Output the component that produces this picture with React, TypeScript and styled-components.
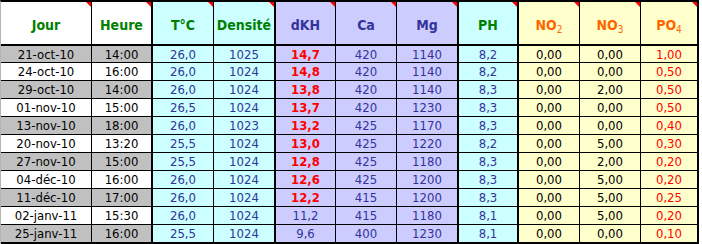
import React from 'react';
import styled, { createGlobalStyle, css } from 'styled-components';

const GlobalStyle = createGlobalStyle`
  html, body {
    margin: 0;
    padding: 0;
    background: #fff;
  }
  body {
    font-family: 'DejaVu Sans Condensed', 'DejaVu Sans', sans-serif;
  }
`;

type Tone = 'plain' | 'cyan' | 'lav' | 'yellow';

const COLS: { w: number; b: number; tone: Tone; head: React.ReactNode; hc: string }[] = [
  { w: 91, b: 1, tone: 'plain', head: 'Jour', hc: '#008000' },
  { w: 61, b: 2, tone: 'plain', head: 'Heure', hc: '#008000' },
  { w: 61, b: 1, tone: 'cyan', head: 'T°C', hc: '#008000' },
  { w: 62, b: 2, tone: 'cyan', head: 'Densité', hc: '#008000' },
  { w: 60, b: 1, tone: 'lav', head: 'dKH', hc: '#333399' },
  { w: 61, b: 1, tone: 'lav', head: 'Ca', hc: '#333399' },
  { w: 62, b: 2, tone: 'lav', head: 'Mg', hc: '#333399' },
  { w: 60, b: 2, tone: 'cyan', head: 'PH', hc: '#008000' },
  { w: 61, b: 1, tone: 'yellow', head: <>NO<sub>2</sub></>, hc: '#ff6600' },
  { w: 61, b: 1, tone: 'yellow', head: <>NO<sub>3</sub></>, hc: '#ff6600' },
  { w: 58, b: 2, tone: 'yellow', head: <>PO<sub>4</sub></>, hc: '#ff6600' },
];

const ROWS = [
  ['21-oct-10', '14:00', '26,0', '1025', '14,7', '420', '1140', '8,2', '0,00', '0,00', '1,00'],
  ['24-oct-10', '16:00', '26,0', '1024', '14,8', '420', '1140', '8,2', '0,00', '0,00', '0,50'],
  ['29-oct-10', '14:00', '26,0', '1024', '13,8', '420', '1140', '8,3', '0,00', '2,00', '0,50'],
  ['01-nov-10', '15:00', '26,5', '1024', '13,7', '420', '1230', '8,3', '0,00', '0,00', '0,50'],
  ['13-nov-10', '18:00', '26,0', '1023', '13,2', '425', '1170', '8,3', '0,00', '0,00', '0,40'],
  ['20-nov-10', '13:20', '25,5', '1024', '13,0', '425', '1220', '8,2', '0,00', '5,00', '0,30'],
  ['27-nov-10', '15:00', '25,5', '1024', '12,8', '425', '1180', '8,3', '0,00', '2,00', '0,20'],
  ['04-déc-10', '16:00', '26,0', '1024', '12,6', '425', '1200', '8,3', '0,00', '5,00', '0,20'],
  ['11-déc-10', '17:00', '26,0', '1024', '12,2', '415', '1200', '8,3', '0,00', '5,00', '0,25'],
  ['02-janv-11', '15:30', '26,0', '1024', '11,2', '415', '1180', '8,1', '0,00', '5,00', '0,20'],
  ['25-janv-11', '16:00', '25,5', '1024', '9,6', '400', '1230', '8,1', '0,00', '0,00', '0,10'],
];

const fills: Record<Tone, string> = {
  plain: '#ffffff',
  cyan: '#ccffff',
  lav: '#ccccff',
  yellow: '#ffffcc',
};

const Sheet = styled.div`
  display: grid;
  grid-template-columns: ${COLS.map((c) => `${c.w}px`).join(' ')};
  width: max-content;
  border-left: 1px solid #b4b4b4;
  border-top: 2px solid #000;
`;

const HeadCell = styled.div<{ $fill: string; $b: number; $color: string }>`
  position: relative;
  box-sizing: border-box;
  height: 44px;
  display: flex;
  align-items: center;
  justify-content: center;
  padding-top: 4px;
  background: ${(p) => p.$fill};
  border-right: ${(p) => p.$b}px solid #000;
  border-bottom: 2px solid #000;
  color: ${(p) => p.$color};
  font-weight: bold;
  font-size: 14px;
`;

const HeadLabel = styled.span`
  line-height: 1;

  sub {
    font-size: 10px;
    font-weight: normal;
    vertical-align: -3px;
    line-height: 0;
  }
`;

const Flag = styled.span`
  position: absolute;
  top: 0;
  right: 0;
  width: 0;
  height: 0;
  border-top: 5px solid #ff0000;
  border-left: 5px solid transparent;
`;

const Cell = styled.div<{ $fill: string; $b: number; $h: number; $last: boolean; $color: string; $bold: boolean }>`
  box-sizing: border-box;
  height: ${(p) => p.$h}px;
  display: flex;
  align-items: center;
  justify-content: center;
  background: ${(p) => p.$fill};
  border-right: ${(p) => p.$b}px solid #000;
  border-bottom: ${(p) => (p.$last ? 2 : 1)}px solid #000;
  color: ${(p) => p.$color};
  font-size: 13px;
  line-height: 1;
  ${(p) =>
    p.$bold &&
    css`
      font-weight: bold;
    `}
`;

function cellColor(ci: number, value: string) {
  if (ci <= 1 || ci === 8 || ci === 9) return '#000';
  if (ci === 10) return '#ff0000';
  if (ci === 4 && parseFloat(value.replace(',', '.')) >= 12) return '#ff0000';
  return '#333399';
}

export default function App() {
  return (
    <>
      <GlobalStyle />
      <Sheet>
        {COLS.map((c, i) => (
          <HeadCell key={'h' + i} $fill={fills[c.tone]} $b={c.b} $color={c.hc}>
            <HeadLabel>{c.head}</HeadLabel>
            <Flag />
          </HeadCell>
        ))}
        {ROWS.map((row, ri) =>
          row.map((v, ci) => {
            const col = COLS[ci];
            const gray = col.tone === 'plain' && ri % 2 === 0;
            const last = ri === ROWS.length - 1;
            const red = ci === 4 && cellColor(ci, v) === '#ff0000';
            return (
              <Cell
                key={ri + '-' + ci}
                $fill={gray ? '#c0c0c0' : fills[col.tone]}
                $b={col.b}
                $h={ri === 0 ? 17 : last ? 19 : 18}
                $last={last}
                $color={cellColor(ci, v)}
                $bold={red}
              >
                {v}
              </Cell>
            );
          })
        )}
      </Sheet>
    </>
  );
}
